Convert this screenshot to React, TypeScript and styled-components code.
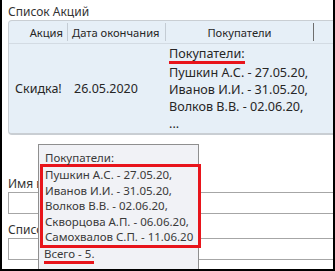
import React from 'react';
import styled, { createGlobalStyle } from 'styled-components';

const GlobalStyle = createGlobalStyle`
  body {
    margin: 0;
    font-family: 'Noto Sans', 'Open Sans', sans-serif;
    font-size: 12px;
    color: #262626;
  }
`;

const Frame = styled.div`
  position: relative;
  width: 335px;
  height: 271px;
  box-sizing: border-box;
  border-left: 2px solid #000;
  border-right: 2px solid #000;
  border-bottom: 2px solid #000;
  background: #fff;
  overflow: hidden;
`;

const Content = styled.div`
  display: flex;
  flex-direction: column;
  padding: 4px 0 0 6px;
`;

const Label = styled.div<{ gap?: number }>`
  height: 16px;
  line-height: 16px;
  font-size: 12px;
  margin-top: ${(p) => p.gap ?? 0}px;
  white-space: nowrap;
  color: #333;
`;

const Table = styled.div`
  display: grid;
  grid-template-columns: 59px 98px 148px 40px;
  grid-template-rows: 23px 89px;
  width: 345px;
  background: #e6eff7;
  border: 1px solid #c9ced3;
  border-bottom-width: 2px;
  border-radius: 4px 0 0 4px;
  box-sizing: border-box;
`;

const HeadCell = styled.div<{ align?: string; dark?: boolean }>`
  position: relative;
  display: flex;
  align-items: center;
  justify-content: ${(p) => p.align ?? 'flex-start'};
  padding: 0 5px 0 4px;
  border-bottom: 1px solid #d3dbe3;
  font-size: 11.2px;
  white-space: nowrap;
  overflow: hidden;

  &::after {
    content: '';
    position: absolute;
    right: 0;
    top: 2px;
    bottom: 2px;
    width: 1px;
    background: ${(p) => (p.dark ? '#6e6e6e' : '#c4ccd4')};
  }
`;

const Cell = styled.div<{ top?: boolean }>`
  display: flex;
  flex-direction: column;
  justify-content: ${(p) => (p.top ? 'flex-start' : 'center')};
  padding: ${(p) => (p.top ? '2px 3px' : '0 6px')};
  white-space: nowrap;
  font-size: ${(p) => (p.top ? 12.6 : 12.5)}px;
  line-height: 17px;
`;

const Marked = styled.span`
  align-self: flex-start;
  border-bottom: 3px solid #e8141b;
  line-height: 15px;
`;

const TextBox = styled.div`
  height: 22px;
  border: 1px solid #a6a6a6;
  border-right: none;
  box-sizing: border-box;
`;

const Tooltip = styled.div`
  position: absolute;
  left: 36px;
  top: 144px;
  width: 161px;
  height: 140px;
  box-sizing: border-box;
  padding: 5px 0 0 1px;
  background: #f1f2f6;
  border: 1px solid #8f8f8f;
  font-size: 11.5px;
  line-height: 16px;
  color: #3a3a3a;
  white-space: nowrap;
`;

const TipTitle = styled.div`
  padding-left: 5px;
`;

const RedBox = styled.div`
  margin-top: -2px;
  border: 3px solid #e8141b;
  padding-left: 2px;
  width: 161px;
  box-sizing: border-box;
  line-height: 15.6px;
`;

const Total = styled.div`
  display: flex;
  margin-top: -2px;
  padding-left: 4px;
`;

const buyers = [
  'Пушкин А.С. - 27.05.20,',
  'Иванов И.И. - 31.05.20,',
  'Волков В.В. - 02.06.20,',
  'Скворцова А.П. - 06.06.20,',
  'Самохвалов С.П. - 11.06.20',
];

const App: React.FC = () => {
  return (
    <Frame>
      <GlobalStyle />
      <Content>
        <Label>Список Акций</Label>
        <Table>
          <HeadCell align="flex-end">Акция</HeadCell>
          <HeadCell>Дата окончания</HeadCell>
          <HeadCell align="center" dark>
            Покупатели
          </HeadCell>
          <HeadCell />
          <Cell>Скидка!</Cell>
          <Cell>26.05.2020</Cell>
          <Cell top>
            <Marked>Покупатели:</Marked>
            {buyers.slice(0, 3).map((b) => (
              <span key={b}>{b}</span>
            ))}
            <span>...</span>
          </Cell>
          <Cell />
        </Table>
        <Label gap={41}>Имя в</Label>
        <TextBox />
        <Label gap={8}>Список</Label>
        <TextBox />
      </Content>
      <Tooltip>
        <TipTitle>Покупатели:</TipTitle>
        <RedBox>
          {buyers.map((b) => (
            <div key={b}>{b}</div>
          ))}
        </RedBox>
        <Total>
          <Marked>Всего - 5.</Marked>
        </Total>
      </Tooltip>
    </Frame>
  );
};

export default App;
